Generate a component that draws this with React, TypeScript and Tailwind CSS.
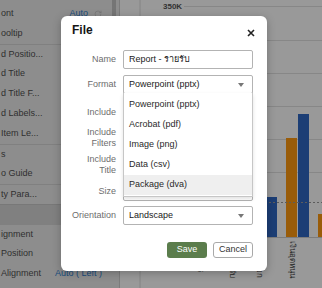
import { RotateCw } from 'lucide-react'

const rows = [
  { label: 'ont', value: 'Auto', icon: true },
  { label: 'ooltip' },
  { label: 'd Positio...', line: true },
  { label: 'd Title' },
  { label: 'd Title F...' },
  { label: 'd Labels...' },
  { label: 'Item Le...' },
  { label: 's', line: true },
  { label: 'o Guide' },
  { label: 'ty Para...', line: true },
  { label: '', band: true },
  { label: 'ignment', line: true },
  { label: 'Position' },
  { label: 'Alignment', value: 'Auto ( Left )' },
  { label: '' },
]

const options = ['Powerpoint (pptx)', 'Acrobat (pdf)', 'Image (png)', 'Data (csv)', 'Package (dva)']

const axisLabels = [
  { x: 81, text: 'ค่าบริการ' },
  { x: 113, text: 'ดอกเบี้ยรับ' },
  { x: 140, text: 'รายได้นอก' },
  { x: 173, text: 'เงินอุดหนุน' },
]

function PropertyPanel() {
  return (
    <div className="relative w-[120px] shrink-0 h-full bg-[#ececec] border-r border-[#cfcfcf] overflow-hidden pt-[4px]">
      <div className="absolute right-[3px] top-0 w-[4px] h-[70px] bg-[#c4c4c4]" />
      {rows.map((r, i) => (
        <div
          key={i}
          className={
            'flex items-center h-[20px] pl-[1px] pr-[17px] ' +
            (r.line ? 'border-t border-[#d6d6d6] ' : '') +
            (r.band ? 'bg-[#d6d6d6] border-t border-[#c9c9c9]' : '')
          }
        >
          <span className="flex-1 text-[9px] text-[#505050] whitespace-nowrap">{r.label}</span>
          {r.value && (
            <span className="flex items-center gap-[6px] text-[9px] text-[#2f7fd0] whitespace-nowrap">
              {r.value}
              {r.icon && <RotateCw size={8} strokeWidth={2} className="text-[#bdbdbd]" />}
            </span>
          )}
        </div>
      ))}
    </div>
  )
}

function Chart() {
  const grid = [40, 73, 106, 139, 172]
  return (
    <div className="flex-1 h-full bg-white">
      <svg width="202" height="288" className="block">
        <line x1="20" y1="0" x2="20" y2="288" stroke="#dcdcdc" />
        <text x="43" y="9" fontSize="8" fontWeight="bold" fill="#555" fontFamily="Liberation Sans, sans-serif">350K</text>
        <line x1="64" y1="6.5" x2="202" y2="6.5" stroke="#e2e2e2" />
        {grid.map((y) => (
          <line key={y} x1="21" y1={y + 0.5} x2="202" y2={y + 0.5} stroke="#e2e2e2" />
        ))}
        <rect x="134" y="197" width="11" height="40" fill="#ff990f" />
        <rect x="146" y="197" width="11" height="40" fill="#3068c4" />
        <rect x="166" y="138" width="11" height="99" fill="#ff990f" />
        <rect x="178" y="114" width="11" height="123" fill="#3068c4" />
        <rect x="198" y="214" width="11" height="23" fill="#ff990f" />
        <line x1="21" y1="202.5" x2="202" y2="202.5" stroke="#9a9a9a" strokeDasharray="2 2" />
        <line x1="21" y1="237.5" x2="202" y2="237.5" stroke="#cfcfcf" />
        {axisLabels.map((l) => (
          <text
            key={l.x}
            transform={`translate(${l.x - 3},241) rotate(90)`}
            fontSize="8"
            fill="#444"
            fontFamily="Liberation Sans, Noto Sans, sans-serif"
          >
            {l.text}
          </text>
        ))}
      </svg>
    </div>
  )
}

function Caret() {
  return (
    <svg width="6" height="4" viewBox="0 0 6 4" className="absolute right-[8px] top-1/2 -translate-y-1/2">
      <path d="M0 0 L6 0 L3 4 Z" fill="#777" />
    </svg>
  )
}

function Row({ label, className, children }: { label: React.ReactNode; className: string; children?: React.ReactNode }) {
  return (
    <div className={'flex items-center ' + className}>
      <div className="w-[55px] shrink-0 text-right text-[9px] leading-[11px] text-[#6d6d6d]">{label}</div>
      <div className="ml-[7px] w-[130px] h-full">{children}</div>
    </div>
  )
}

function FileDialog() {
  return (
    <div className="absolute left-[61px] top-[16px] w-[206px] h-[255px] rounded-[6px] bg-white shadow-[0_2px_8px_rgba(0,0,0,0.25)]">
      <div className="flex items-center justify-between pt-[6px] pl-[11px] pr-[12px] h-[22px]">
        <span className="text-[12px] font-bold text-[#161616]">File</span>
        <svg width="8" height="8" viewBox="0 0 8 8" className="mt-[5px]">
          <path d="M1 1 L7 7 M7 1 L1 7" stroke="#222" strokeWidth="1.6" />
        </svg>
      </div>

      <Row label="Name" className="mt-[12px] h-[19px]">
        <div className="h-full border border-[#b3b3b3] rounded-[2px] flex items-center pl-[5px] text-[9px] text-[#222]">
          Report - รายรับ
        </div>
      </Row>
      <Row label="Format" className="mt-[6px] h-[19px]">
        <div className="relative h-full border border-[#b3b3b3] rounded-[2px] flex items-center pl-[5px] text-[9px] text-[#222]">
          Powerpoint (pptx)
          <Caret />
        </div>
      </Row>
      <Row label="Include" className="mt-[8px] h-[20px]" />
      <Row label={<>Include<br />Filters</>} className="mt-[4px] h-[23px]" />
      <Row label={<>Include<br />Title</>} className="mt-[4px] h-[23px]" />
      <Row label="Size" className="mt-[6px] h-[19px]">
        <div className="h-full border border-[#b3b3b3] rounded-[2px]" />
      </Row>
      <Row label="Orientation" className="mt-[5px] h-[19px]">
        <div className="relative h-full border border-[#b3b3b3] rounded-[2px] flex items-center pl-[5px] text-[9px] text-[#222]">
          Landscape
          <Caret />
        </div>
      </Row>

      <div className="flex justify-end gap-[6px] mt-[17px] pr-[14px]">
        <button className="w-[40px] h-[16px] rounded-[3px] bg-[#5b7d4c] text-white text-[9px]">Save</button>
        <button className="w-[40px] h-[16px] rounded-[3px] border border-[#a9a9a9] bg-white text-[#333] text-[9px]">Cancel</button>
      </div>

      <div className="absolute left-[62px] top-[77px] w-[130px] h-[104px] bg-white border border-[#c6c6c6] border-t-0 shadow-[0_2px_4px_rgba(0,0,0,0.12)] py-[2px]">
        {options.map((o, i) => (
          <div
            key={o}
            className={
              'h-[20px] flex items-center pl-[5px] text-[9px] text-[#2a2a2a] ' +
              (i === options.length - 1 ? 'bg-[#efefef]' : '')
            }
          >
            {o}
          </div>
        ))}
      </div>
    </div>
  )
}

export default function App() {
  return (
    <div className="relative w-[322px] h-[288px] overflow-hidden font-['Liberation_Sans','Noto_Sans',sans-serif]">
      <div className="flex h-full">
        <PropertyPanel />
        <Chart />
      </div>
      <div className="absolute inset-0 bg-black/40" />
      <FileDialog />
    </div>
  )
}
